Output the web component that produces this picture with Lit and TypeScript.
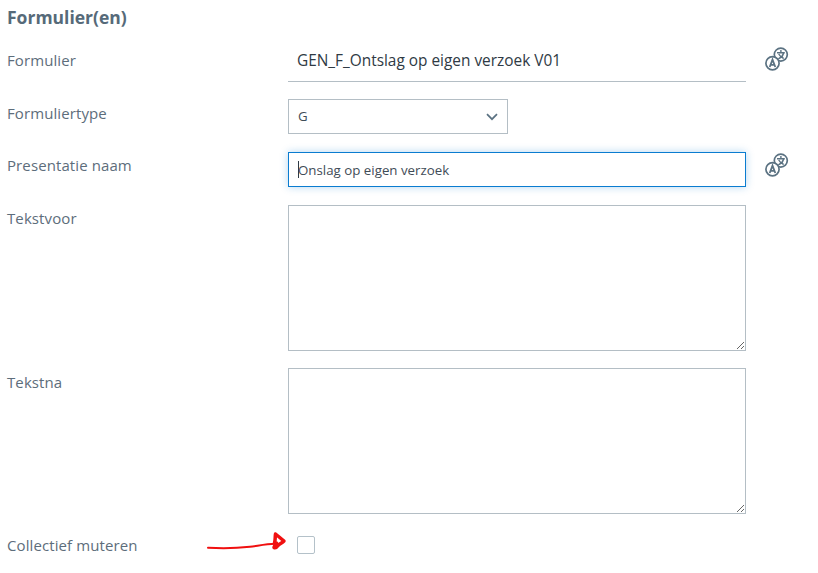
import { LitElement, html, css, svg } from "lit";
import { customElement } from "lit/decorators.js";

const transIcon = svg`<svg class="icon" width="24" height="26" viewBox="0 0 24 26" fill="none" stroke="#5b7282" stroke-width="1.700">
  <circle cx="15.800" cy="7.600" r="6.500"/>
  <path d="M12 5.800h7.800M15.900 3v2.800M18.600 6.200c-.9 2.900-2.900 4.700-5.300 5.600M13.700 7c1 2 2.800 3.500 5 4.500" stroke-width="1.400"/>
  <circle cx="7.500" cy="16.300" r="6.600" fill="#fff"/>
  <path d="M4.700 20 7.500 12.600l2.800 7.400M5.600 17.900h3.800" stroke-width="1.800"/>
</svg>`;

@customElement("app-root")
export class AppRoot extends LitElement {
  static styles = css`
    :host {
      display: block;
      position: relative;
      width: 818px;
      height: 573px;
      background: #fff;
      overflow: hidden;
      font-family: "Open Sans", sans-serif;
      color: #5d6d7b;
    }
    .form {
      display: grid;
      grid-template-columns: 281px 458px 42px;
      padding: 6px 0 0 7px;
      align-items: start;
    }
    h2 {
      grid-column: 1 / -1;
      margin: 0 0 13px;
      font-size: 17.500px;
      line-height: 22px;
      font-weight: 700;
      color: #566a79;
    }
    .label {
      font-size: 15px;
      line-height: 20px;
      padding-top: 3px;
      letter-spacing: 0.1px;
    }
    .label.first { padding-top: 9px; }
    .label.mid { padding-top: 4px; }
    .cell { grid-column: 2; min-width: 0; }
    .iconcell { grid-column: 3; padding: 6px 0 0 19px; }
    .iconcell.near { padding-top: 1px; }
    .static {
      height: 41px;
      box-sizing: border-box;
      border-bottom: 1px solid #b4bec5;
      padding: 10px 0 0 9px;
      font-size: 15.400px;
      line-height: 20px;
      color: #2f3a44;
      margin-bottom: 17px;
    }
    .select {
      box-sizing: border-box;
      width: 220px;
      height: 35px;
      border: 1px solid #b4bec5;
      display: flex;
      align-items: center;
      justify-content: space-between;
      padding: 0 9px 2px;
      font-size: 13.300px;
      color: #3f4c57;
      margin-bottom: 18px;
    }
    .select svg { margin-top: 2px; }
    .input {
      box-sizing: border-box;
      height: 35px;
      border: 1px solid #0a7cd0;
      box-shadow: 0 0 8px rgba(10, 124, 208, 0.3);
      display: flex;
      align-items: center;
      padding: 0 9px;
      font-size: 13.300px;
      color: #3f4c57;
      margin-bottom: 18px;
    }
    .caret {
      width: 1px;
      height: 17px;
      background: #2f3a44;
      margin-right: -1px;
    }
    textarea {
      display: block;
      box-sizing: border-box;
      width: 458px;
      height: 146px;
      border: 1px solid #b4bec5;
      border-radius: 0;
      outline: none;
      margin: 0 0 17px;
      padding: 6px 9px;
      background: #fff;
      resize: both;
    }
    .check {
      width: 18px;
      height: 18px;
      box-sizing: border-box;
      border: 1px solid #b4c1c9;
      border-radius: 2px;
      margin: 5px 0 0 9px;
    }
    .arrow { position: absolute; left: 200px; top: 525px; }
  `;

  render() {
    return html`
      <div class="form">
        <h2>Formulier(en)</h2>

        <div class="label first">Formulier</div>
        <div class="cell"><div class="static">GEN_F_Ontslag op eigen verzoek V01</div></div>
        <div class="iconcell">${transIcon}</div>

        <div class="label mid">Formuliertype</div>
        <div class="cell">
          <div class="select">
            <span>G</span>
            <svg width="12" height="8" viewBox="0 0 12 8" fill="none" stroke="#5b7282" stroke-width="1.7"><path d="M1 1.200 6 6.200l5-5"/></svg>
          </div>
        </div>
        <div></div>

        <div class="label">Presentatie naam</div>
        <div class="cell"><div class="input"><span class="caret"></span><span>Onslag op eigen verzoek</span></div></div>
        <div class="iconcell near">${transIcon}</div>

        <div class="label">Tekstvoor</div>
        <div class="cell"><textarea></textarea></div>
        <div></div>

        <div class="label mid">Tekstna</div>
        <div class="cell"><textarea></textarea></div>
        <div></div>

        <div class="label mid">Collectief muteren</div>
        <div class="cell"><div class="check"></div></div>
      </div>
      <svg class="arrow" width="95" height="32" viewBox="0 0 95 32" fill="none" stroke="#f01010" stroke-linecap="round" stroke-linejoin="round">
        <path d="M8 22.800c14 .8 28 .6 42-1 8-1 16-2.800 25-3" stroke-width="2"/>
        <path d="M74.500 18c1-3 .5-6 1-9 2.500 2 5.500 4.500 8.500 7-2 2-4 2.500-6 4.500-1 1.500-2.500 2.500-4 2 .5-2 1.500-3.500 2.500-4.500" stroke-width="3.500"/>
      </svg>
    `;
  }
}
